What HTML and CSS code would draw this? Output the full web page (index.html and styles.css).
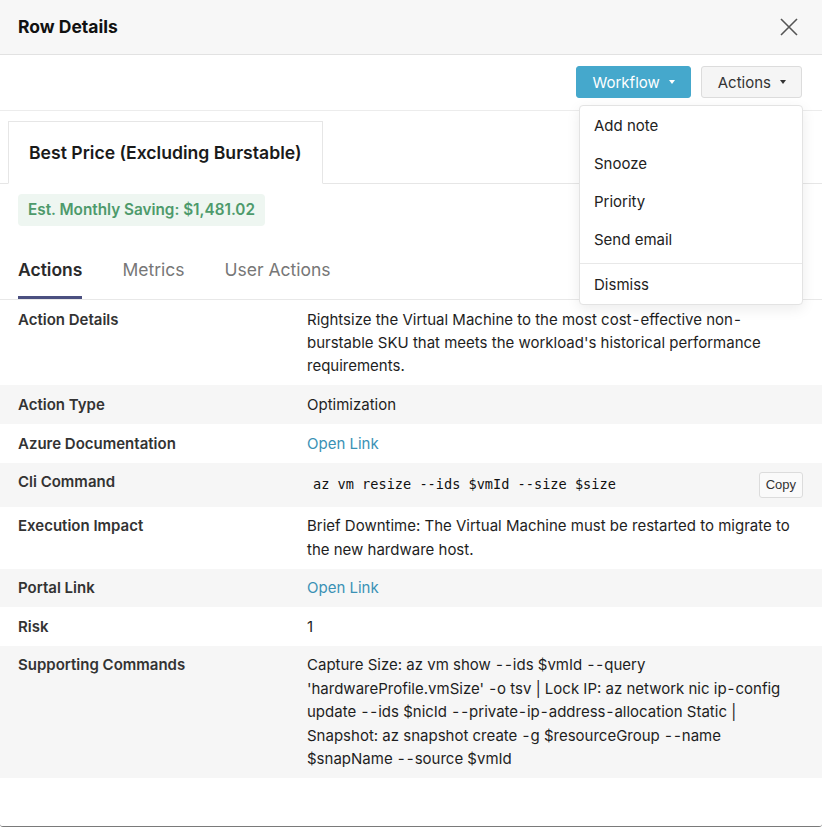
FILE: index.html
```html
<!DOCTYPE html>
<html lang="en">
<head>
  <meta charset="UTF-8" />
  <meta name="viewport" content="width=device-width, initial-scale=1.0"/>
  <title>Row Details</title>
  <link rel="stylesheet" href="styles.css">
</head>
<body>
  <div class="modal">
    <div class="modal-header">
      <h2>Row Details</h2>
      <button class="close" aria-label="Close">
        <svg width="18" height="18" viewBox="0 0 18 18">
          <path d="M1 1 L17 17 M17 1 L1 17" stroke="#555" stroke-width="1.6" fill="none"/>
        </svg>
      </button>
    </div>

    <div class="toolbar">
      <button class="btn btn-primary">Workflow <span class="caret"></span></button>
      <button class="btn btn-default">Actions <span class="caret"></span></button>

      <ul class="dropdown">
        <li>Add note</li>
        <li>Snooze</li>
        <li>Priority</li>
        <li>Send email</li>
        <li class="divider"></li>
        <li>Dismiss</li>
      </ul>
    </div>

    <div class="option-tabs">
      <div class="option-tab">Best Price (Excluding Burstable)</div>
    </div>

    <div class="saving">Est. Monthly Saving: $1,481.02</div>

    <div class="tabs">
      <div class="tab active">Actions</div>
      <div class="tab">Metrics</div>
      <div class="tab">User Actions</div>
    </div>

    <div class="details">
      <div class="row">
        <div class="label">Action Details</div>
        <div class="value">Rightsize the Virtual Machine to the most cost<span class="hy">-</span>effective non<span class="hy">-</span>burstable SKU that meets the workload's historical performance requirements.</div>
      </div>
      <div class="row">
        <div class="label">Action Type</div>
        <div class="value">Optimization</div>
      </div>
      <div class="row">
        <div class="label">Azure Documentation</div>
        <div class="value"><a href="#">Open Link</a></div>
      </div>
      <div class="row">
        <div class="label">Cli Command</div>
        <div class="value value-code">
          <code>az vm resize --ids $vmId --size $size</code>
          <button class="copy">Copy</button>
        </div>
      </div>
      <div class="row">
        <div class="label">Execution Impact</div>
        <div class="value">Brief Downtime: The Virtual Machine must be restarted to migrate to the new hardware host.</div>
      </div>
      <div class="row">
        <div class="label">Portal Link</div>
        <div class="value"><a href="#">Open Link</a></div>
      </div>
      <div class="row">
        <div class="label">Risk</div>
        <div class="value">1</div>
      </div>
      <div class="row">
        <div class="label">Supporting Commands</div>
        <div class="value">Capture Size: az vm show <span class="hy">-</span><span class="hy">-</span>ids $vmId <span class="hy">-</span><span class="hy">-</span>query 'hardwareProfile.vmSize' <span class="hy">-</span>o tsv | Lock IP: az network nic ip<span class="hy">-</span>config update <span class="hy">-</span><span class="hy">-</span>ids $nicId <span class="hy">-</span><span class="hy">-</span>private<span class="hy">-</span>ip<span class="hy">-</span>address<span class="hy">-</span>allocation Static | Snapshot: az snapshot create <span class="hy">-</span>g $resourceGroup <span class="hy">-</span><span class="hy">-</span>name $snapName <span class="hy">-</span><span class="hy">-</span>source $vmId</div>
      </div>
    </div>
  </div>
</body>
</html>
```

FILE: styles.css
```css
body {
  margin: 0;
  font-family: 'Inter', sans-serif;
  color: #222;
  background: #fff;
}
.modal {
  width: 822px;
  height: 827px;
  box-sizing: border-box;
  border-bottom: 1px solid #7a7a7a;
  border-radius: 0 0 3px 3px;
  background: #fff;
}
.modal-header {
  height: 54px;
  background: #f7f7f7;
  border-bottom: 1px solid #e2e2e2;
  display: flex;
  align-items: center;
  justify-content: space-between;
  padding: 0 24px 0 18px;
}
.modal-header h2 {
  margin: 0;
  font-size: 17.5px;
  font-weight: 700;
  color: #111;
  position: relative;
  top: -1px;
}
.close {
  border: none;
  background: none;
  padding: 0;
  width: 18px;
  height: 18px;
  cursor: pointer;
}
.close svg {
  display: block;
}
.toolbar {
  position: relative;
  height: 56px;
  border-bottom: 1px solid #ececec;
  display: flex;
  justify-content: flex-end;
  align-items: flex-start;
  gap: 10px;
  padding: 11px 20px 0 0;
  box-sizing: border-box;
}
.btn {
  height: 32px;
  font-family: 'Inter', sans-serif;
  font-size: 15px;
  border-radius: 3px;
  padding: 0 15px;
  cursor: pointer;
  display: flex;
  align-items: center;
  gap: 9px;
}
.btn-primary {
  background: #45a8cc;
  color: #fff;
  border: 1px solid #45a8cc;
}
.btn-default {
  background: #f5f5f5;
  color: #333;
  border: 1px solid #dcdcdc;
  padding: 0 15px 0 16px;
}
.caret {
  width: 0;
  height: 0;
  border-left: 3px solid transparent;
  border-right: 3px solid transparent;
  border-top: 4px solid currentColor;
}
.dropdown {
  position: absolute;
  top: 50px;
  right: 19px;
  width: 222px;
  margin: 0;
  padding: 1px 0 0;
  list-style: none;
  background: #fff;
  border: 1px solid #e3e3e3;
  border-radius: 4px;
  box-shadow: 0 4px 14px rgba(0,0,0,0.08);
  z-index: 10;
}
.dropdown li {
  height: 38px;
  line-height: 38px;
  padding: 0 14px;
  font-size: 15px;
  color: #222;
  cursor: pointer;
}
.dropdown .divider {
  height: 1px;
  background: #e8e8e8;
  margin: 4px 0 2px;
  padding: 0;
}
.option-tabs {
  margin-top: 10px;
  padding-left: 8px;
  border-bottom: 1px solid #e6e6e6;
  display: flex;
}
.option-tab {
  border: 1px solid #e6e6e6;
  border-bottom: 1px solid #fff;
  margin-bottom: -1px;
  padding: 0 20px;
  height: 61px;
  line-height: 61px;
  font-size: 17.6px;
  font-weight: 600;
  color: #1a1a1a;
  background: #fff;
}
.saving {
  display: inline-block;
  margin: 10px 0 0 18px;
  padding: 0 10px;
  height: 32px;
  line-height: 32px;
  background: #eef6f1;
  color: #4d9a6b;
  font-size: 15.3px;
  font-weight: 600;
  border-radius: 4px;
}
.tabs {
  display: flex;
  gap: 40px;
  margin-top: 16px;
  padding-left: 18px;
  border-bottom: 1px solid #e8e8e8;
}
.tab {
  padding: 15px 0 14px;
  line-height: 25px;
  font-size: 17.5px;
  color: #777;
  border-bottom: 3px solid transparent;
}
.tab.active {
  color: #2a2a2a;
  font-weight: 600;
  border-bottom-color: #4b5080;
}
.row {
  display: grid;
  grid-template-columns: 289px 1fr;
}
.row:nth-child(even) {
  background: #f6f6f6;
}
.label {
  padding: 7.6px 18px;
  font-size: 15px;
  line-height: 23.4px;
  font-weight: 600;
  color: #333;
}
.value {
  padding: 7.6px 32px 7.6px 18px;
  font-size: 15px;
  line-height: 23.4px;
  color: #1e1e1e;
}
.hy {
  margin: 0 1px;
}
.value a {
  color: #3a91b5;
  text-decoration: none;
}
.value-code {
  display: flex;
  align-items: center;
  justify-content: space-between;
  padding: 9px 19px 9px 24px;
}
.value-code code {
  font-family: 'DejaVu Sans Mono', monospace;
  font-size: 13.6px;
  color: #111;
}
.copy {
  height: 26px;
  padding: 0 6px;
  font-family: 'Liberation Sans', Arial, sans-serif;
  font-size: 13px;
  color: #333;
  background: #fafafa;
  border: 1px solid #dcdcdc;
  border-radius: 3px;
  cursor: pointer;
}
```
